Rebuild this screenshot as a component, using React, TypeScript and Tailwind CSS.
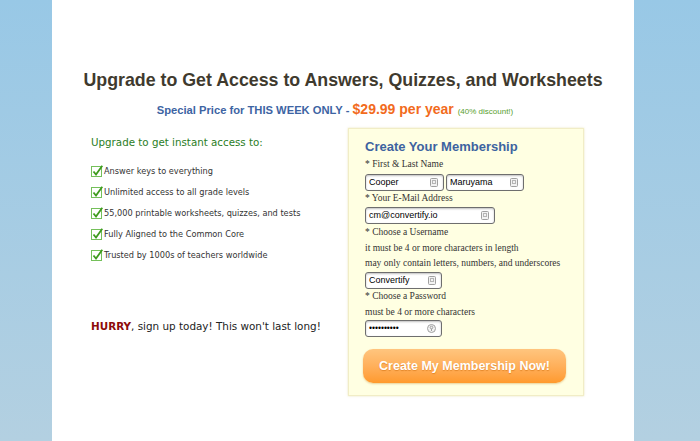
import React from "react";

const features = [
  "Answer keys to everything",
  "Unlimited access to all grade levels",
  "55,000 printable worksheets, quizzes, and tests",
  "Fully Aligned to the Common Core",
  "Trusted by 1000s of teachers worldwide",
];

const Check = () => (
  <svg width="12" height="12" viewBox="0 0 12 12" className="shrink-0">
    <rect x="0.5" y="1.5" width="10" height="10" fill="#fff" stroke="#74c05a" />
    <path d="M2.5 6.5 L5 9.5 L11.3 0.8" fill="none" stroke="#3f9b1f" strokeWidth="1.8" />
  </svg>
);

const CardIcon = () => (
  <svg width="8" height="9" viewBox="0 0 8 9">
    <rect x="0.5" y="0.5" width="7" height="8" rx="1" fill="#f2f2f2" stroke="#a0a0a0" />
    <rect x="2.5" y="2.5" width="3" height="3" fill="none" stroke="#b5b5b5" />
  </svg>
);

const KeyIcon = () => (
  <svg width="9" height="9" viewBox="0 0 9 9">
    <circle cx="4.5" cy="4.5" r="4" fill="#f2f2f2" stroke="#a0a0a0" />
    <circle cx="4.5" cy="3.5" r="1.3" fill="none" stroke="#a0a0a0" />
    <path d="M4.5 4.8 V7" stroke="#a0a0a0" />
  </svg>
);

const Field = ({ value, width, password }: { value: string; width: string; password?: boolean }) => (
  <div
    className={`${width} h-[17px] flex items-center justify-between pl-[3px] pr-[5px] bg-white border border-[#6e6e6e] rounded-[3px] shadow-[inset_0_1px_2px_rgba(0,0,0,0.25)] text-[9px] text-black font-['Liberation_Sans',Arial,sans-serif]`}
  >
    <span className={password ? "text-[8.5px]" : ""}>{value}</span>
    {password ? <KeyIcon /> : <CardIcon />}
  </div>
);

const Label = ({ children, className = "" }: { children: React.ReactNode; className?: string }) => (
  <div className={`h-[12px] leading-[12px] text-[9.5px] text-[#333] font-['Liberation_Serif',Georgia,serif] whitespace-nowrap ${className}`}>
    {children}
  </div>
);

export default function App() {
  return (
    <div className="w-[700px] h-[441px] overflow-hidden bg-gradient-to-b from-[#98c8e6] to-[#b3d0e1]">
      <div className="ml-[52px] w-[582px] h-[441px] bg-white flex flex-col">
        <h1 className="mt-[69px] h-[22px] leading-[22px] text-center text-[17.8px] font-bold text-[#3f3a2e] font-['Liberation_Sans',Arial,sans-serif]">
          Upgrade to Get Access to Answers, Quizzes, and Worksheets
        </h1>
        <p className="mt-[9px] pr-[16px] h-[18px] leading-[18px] text-center font-bold font-['Liberation_Sans',Arial,sans-serif]">
          <span className="text-[11.2px] text-[#3d64a3]">Special Price for THIS WEEK ONLY - </span>
          <span className="text-[14px] text-[#f26b1d]">$29.99 per year </span>
          <span className="text-[8px] font-normal text-[#57a02e]">(40% discount!)</span>
        </p>

        <div className="mt-[10px] flex">
          <div className="w-[296px] shrink-0 pl-[39px] pt-[7px] flex flex-col font-['DejaVu_Sans',Verdana,sans-serif]">
            <div className="h-[14px] leading-[14px] text-[10.3px] text-[#2a7d25]">Upgrade to get instant access to:</div>
            <ul className="mt-[11.5px] flex flex-col">
              {features.map((f) => (
                <li key={f} className="h-[21px] flex items-center text-[8.2px] text-[#333]">
                  <Check />
                  <span className="ml-[1px]">{f}</span>
                </li>
              ))}
            </ul>
            <div className="mt-[53px] h-[14px] leading-[14px] text-[10.4px] text-[#222] whitespace-nowrap">
              <span className="font-bold text-[#8e0b0b]">HURRY</span>, sign up today! This won't last long!
            </div>
          </div>

          <div className="w-[236px] h-[268px] bg-[#ffffe2] border border-[#f1edc6] shadow-[0_0_2px_rgba(220,210,140,0.6)] pl-[16px] pt-[10px] flex flex-col">
            <h2 className="h-[16px] leading-[16px] text-[13px] font-bold text-[#3d63a0] font-['Liberation_Sans',Arial,sans-serif]">
              Create Your Membership
            </h2>
            <Label className="mt-[3px]">* First &amp; Last Name</Label>
            <div className="mt-[4px] flex gap-[2px]">
              <Field value="Cooper" width="w-[79px]" />
              <Field value="Maruyama" width="w-[78px]" />
            </div>
            <Label className="mt-[1px]">* Your E-Mail Address</Label>
            <div className="mt-[3px]">
              <Field value="cm@convertify.io" width="w-[130px]" />
            </div>
            <Label className="mt-[2px]">* Choose a Username</Label>
            <Label className="mt-[4px]">it must be 4 or more characters in length</Label>
            <Label className="mt-[3px]">may only contain letters, numbers, and underscores</Label>
            <div className="mt-[3px]">
              <Field value="Convertify" width="w-[77px]" />
            </div>
            <Label className="mt-[1px]">* Choose a Password</Label>
            <Label className="mt-[4px]">must be 4 or more characters</Label>
            <div className="mt-[2px]">
              <Field value="••••••••••" width="w-[77px]" password />
            </div>
            <button className="mt-[12px] -ml-[2px] w-[203px] h-[34px] rounded-[10px] bg-gradient-to-b from-[#ffc57e] to-[#ff9a2c] shadow-[0_1px_2px_rgba(200,140,40,0.4)] text-white text-[12.5px] font-bold font-['Liberation_Sans',Arial,sans-serif] [text-shadow:0_1px_1px_rgba(200,100,0,0.5)]">
              Create My Membership Now!
            </button>
          </div>
        </div>
      </div>
    </div>
  );
}
